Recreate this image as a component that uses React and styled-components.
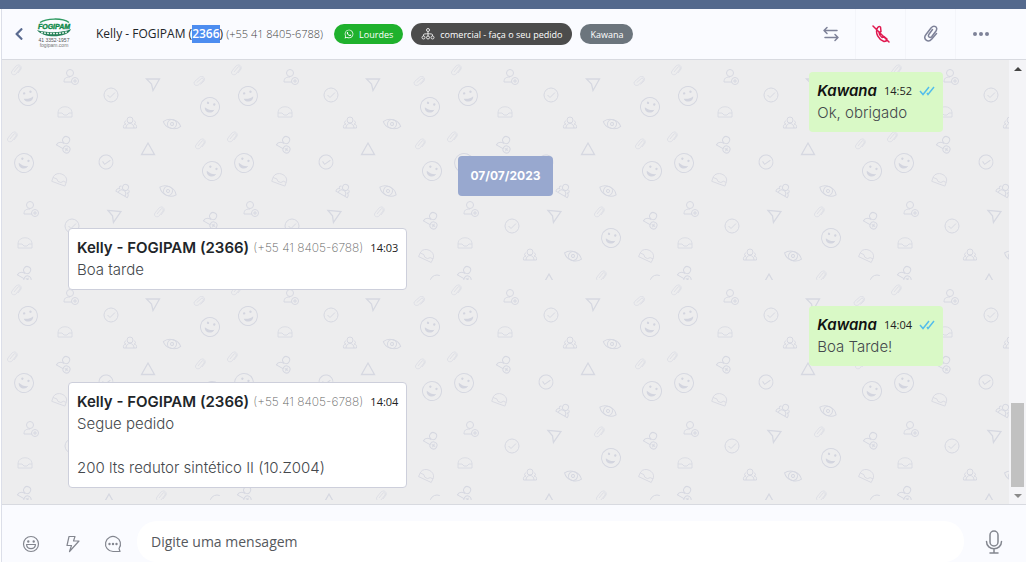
import styled, { createGlobalStyle } from "styled-components";
import { FaChevronLeft, FaWhatsapp } from "react-icons/fa";

const GlobalStyle = createGlobalStyle`
  * {
    box-sizing: border-box;
  }
  body {
    margin: 0;
    font-family: "Open Sans", "Noto Sans", sans-serif;
    color: #212529;
  }
  button {
    background: none;
    border: none;
    padding: 0;
    font: inherit;
    color: inherit;
    cursor: pointer;
  }
`;

const Page = styled.div`
  display: flex;
  flex-direction: column;
  height: 100vh;
  overflow: hidden;
  background-color: #fff;
`;

const TopBar = styled.div`
  flex: none;
  height: 9px;
  background-color: #54698d;
`;

const Panel = styled.main`
  display: flex;
  flex: 1;
  flex-direction: column;
  min-height: 0;
  margin-left: 1px;
  border-left: 1px solid #dcdfe9;
  background-color: #fafbff;
`;

const Header = styled.header`
  align-items: center;
  border-bottom: 1px solid #d8dae0;
  display: flex;
  flex: none;
  height: 51px;
  padding: 0 20px 0 10px;
`;

const BackButton = styled.button`
  color: #5a6b90;
  display: flex;
  width: 24px;
`;

const Contact = styled.h1`
  font-size: 12px;
  font-weight: 400;
  line-height: 18px;
  margin: 0 11px 0 24px;
  white-space: nowrap;
`;

const Selected = styled.span`
  background-color: #4d8df0;
  color: #fff;
  display: inline-block;
  font-weight: 600;
`;

const HeaderPhone = styled.span`
  color: #444;
  font-size: 11px;
  font-weight: 300;
`;

const Tags = styled.div`
  align-items: center;
  display: flex;
  gap: 8px;
`;

const Tag = styled.span`
  align-items: center;
  background-color: ${({ $cor }) => $cor};
  border-radius: 12px;
  color: #fff;
  display: flex;
  font-size: 9px;
  font-weight: 500;
  gap: 5px;
  height: ${({ $alto }) => ($alto ? "22px" : "20px")};
  padding: 0 10px;
  white-space: nowrap;
`;

const Actions = styled.div`
  display: flex;
  margin-left: auto;
`;

const Action = styled.button`
  align-items: center;
  border-right: 1px solid #f4f5fa;
  color: ${({ $cor }) => $cor || "#7e8299"};
  display: flex;
  height: 50px;
  justify-content: center;
  width: 50px;
  &:last-child {
    border-right: none;
  }
`;

const Chat = styled.section`
  display: flex;
  flex: 1;
  min-height: 0;
`;

const Messages = styled.div`
  background-color: #ededee;
  display: flex;
  flex: 1;
  flex-direction: column;
  gap: 16px;
  isolation: isolate;
  overflow: hidden;
  padding: 12px 66px;
  position: relative;
`;

const Wallpaper = styled.svg`
  height: 100%;
  left: 0;
  position: absolute;
  top: 0;
  width: 100%;
  z-index: -1;
`;

const Message = styled.article`
  align-self: ${({ $enviada }) => ($enviada ? "flex-end" : "flex-start")};
  background-color: ${({ $enviada }) => ($enviada ? "#d9f9c6" : "#fff")};
  border: ${({ $enviada }) => ($enviada ? "none" : "1px solid #cdcfdb")};
  border-radius: 4px;
  font-family: Inter, sans-serif;
  font-size: 15px;
  line-height: 22px;
  padding: 8px;
`;

const MessageHead = styled.div`
  align-items: center;
  display: flex;
  white-space: nowrap;
`;

const Author = styled.strong`
  color: ${({ $enviada }) => ($enviada ? "#111" : "#212529")};
  font-style: ${({ $enviada }) => ($enviada ? "italic" : "normal")};
  font-weight: 600;
`;

const Phone = styled.span`
  color: #666;
  font-size: 12px;
  font-weight: 200;
  margin-left: 4px;
`;

const Time = styled.time`
  color: #222;
  font-family: "Open Sans", sans-serif;
  font-size: 11px;
  margin-left: 7px;
`;

const Checks = styled.svg`
  margin-left: 7px;
`;

const Text = styled.p`
  color: #44484c;
  font-weight: 300;
  margin: 0;
  white-space: pre-line;
`;

const DateBadge = styled.div`
  align-self: center;
  background-color: #98a8cf;
  border-radius: 4px;
  color: #fff;
  font-family: Inter, sans-serif;
  font-size: 12px;
  font-weight: 700;
  line-height: 24px;
  margin: 8px 0 16px;
  padding: 8px 13px;
`;

const ScrollBar = styled.div`
  align-items: center;
  background-color: #f4f4f7;
  display: flex;
  flex: none;
  flex-direction: column;
  justify-content: space-between;
  width: 17px;
`;

const ScrollButton = styled.button`
  align-items: center;
  color: ${({ $cor }) => $cor};
  display: flex;
  height: 17px;
  justify-content: center;
  width: 17px;
`;

const Thumb = styled.div`
  background-color: #c1c1c1;
  height: 19%;
  margin-top: auto;
  width: 13px;
`;

const Footer = styled.footer`
  align-items: center;
  border-top: 1px solid #d8dae0;
  color: #83868f;
  display: flex;
  flex: none;
  padding: 16px 22px 0 20px;
`;

const Tools = styled.div`
  display: flex;
  gap: 23px;
  margin-top: 4px;
`;

const ToolButton = styled.button`
  display: flex;
`;

const Input = styled.input`
  background-color: #fff;
  border: none;
  border-radius: 20px;
  color: #444;
  flex: 1;
  font-family: "Open Sans", sans-serif;
  font-size: 14px;
  height: 41px;
  margin: 0 20px 0 15px;
  min-width: 0;
  outline: none;
  padding: 0 14px;
  &::placeholder {
    color: #55585d;
    opacity: 1;
  }
`;

function Logo() {
  return (
    <svg width="36" height="32" viewBox="0 0 36 32" role="img" aria-label="Fogipam">
      <path d="M4 4.500C10 0.500 26 -0.500 33 4.500" fill="none" stroke="#2e9a62" strokeWidth="1.500" />
      <text x="18" y="11" textAnchor="middle" fontFamily="Liberation Sans, sans-serif" fontSize="7" fontWeight="700" fontStyle="italic" fill="#108a4a" stroke="#108a4a" strokeWidth="0.400">
        FOGIPAM
      </text>
      <path d="M1 12C9 15 27 15 35 11C32 20 7 21 1 12Z" fill="#26805a" />
      <path d="M5 14.500C14 16 24 16 31 14" fill="none" stroke="#dcece2" strokeWidth="1.500" strokeDasharray="2 1" />
      <text x="18" y="24" textAnchor="middle" fontFamily="Liberation Sans, sans-serif" fontSize="5" fill="#555">
        41 3352-1957
      </text>
      <text x="18" y="29" textAnchor="middle" fontFamily="Liberation Sans, sans-serif" fontSize="5" fill="#777">
        fogipam.com
      </text>
    </svg>
  );
}

function Icon({ size = 18, width = 1.5, children }) {
  return (
    <svg width={size} height={size} viewBox="0 0 18 18" fill="none" stroke="currentColor" strokeWidth={width} strokeLinecap="round" strokeLinejoin="round" aria-hidden="true">
      {children}
    </svg>
  );
}

const clipPath = "M10.500 4.500L6.800 9.500C5.500 11.800 8.200 13.500 9.800 11.500L14 6C16.500 2 12 -0.500 9 3L4 9.500C0.500 14 6 18.500 9.800 14L14.500 8.500";

function OrgIcon() {
  return (
    <svg width="14" height="14" viewBox="0 0 14 14" fill="none" stroke="#e4e4e4" strokeWidth="1" aria-hidden="true">
      <circle cx="7" cy="3" r="1.500" />
      <path d="M7 4.500V9M2.500 9V7.500C2.500 6.500 11.500 6.500 11.500 7.500V9" />
      <circle cx="2.500" cy="10.500" r="1.500" />
      <circle cx="7" cy="10.500" r="1.500" />
      <circle cx="11.500" cy="10.500" r="1.500" />
    </svg>
  );
}

function ArrowGlyph({ d }) {
  return (
    <svg width="8" height="4" viewBox="0 0 8 4" fill="currentColor" aria-hidden="true">
      <path d={d} />
    </svg>
  );
}

// shapes of the wallpaper, drawn around their own centre
const shapes = {
  clip: <path d="M-2 2L2 -3C3 -4 5 -3 4 -1L0 4C-2 6 -6 4 -4 1L0 -4C2 -6 6 -5 5 -1L2 3" strokeWidth="0.800" opacity="0.800" />,
  smile: (
    <>
      <circle r="9.500" />
      <circle cx="-3" cy="-3.500" r="1.200" fill="#d3d5df" stroke="none" />
      <circle cx="3.500" cy="-3.500" r="1.200" fill="#d3d5df" stroke="none" />
      <path d="M-5 1.500C-1 3 2 3 5 1.500C4 7 -4 7 -5 1.500Z" fill="#d3d5df" stroke="none" />
    </>
  ),
  check: (
    <>
      <circle r="7" />
      <path d="M-3.500 0L-1 2.500L4 -2.500" />
    </>
  ),
  send: <path d="M-6.500 -5H6.500L0 6.500L-1.500 0Z" strokeWidth="1.300" />,
  up: <path d="M0 -6L6.500 5.500H-6.500Z" strokeWidth="1.300" />,
  user: (
    <>
      <circle cx="-1" cy="-4" r="3.500" />
      <path d="M1 5H-7C-7 1 -5 0 -1 0" />
      <circle cx="4" cy="4" r="3.500" />
      <path d="M4 2V6M2 4H6" />
    </>
  ),
  users: (
    <>
      <circle cy="-3" r="3" />
      <path d="M-4 5C-4 -1 4 -1 4 5ZM-4 -2C-6 -2 -6 1 -4 1C-6 1 -7 3 -6.500 5H-4M4 -2C6 -2 6 1 4 1C6 1 7 3 6.500 5H4" />
    </>
  ),
  eye: (
    <>
      <path d="M-9 0C-5 -6 5 -6 9 0C5 6 -5 6 -9 0Z" />
      <circle r="4.500" />
      <circle r="1.500" />
    </>
  ),
  inbox: <path d="M-7 0C-6 -7 6 -7 7 0V5H-7ZM-7 1H-3L-1 3H2L4 1H7" strokeWidth="0.800" />,
};

const wallpaper = [
  ["clip", 16, 10, 0],
  ["user", 71, 17, 0],
  ["send", 153, 24, 0],
  ["clip", 199, 21, 10],
  ["smile", 28, 36, -15],
  ["check", 111, 35, 0],
  ["smile", 210, 47, 15],
  ["inbox", 65, 52, 0],
  ["users", 130, 63, 0],
  ["eye", 172, 64, 15],
  ["clip", 12, 77, 0],
  ["user", 65, 84, 30],
  ["up", 148, 89, 0],
  ["clip", 200, 84, 0],
  ["smile", 24, 103, 20],
  ["check", 106, 102, 10],
  ["smile", 212, 111, 20],
  ["inbox", 60, 119, 20],
  ["users", 124, 130, 30],
  ["eye", 168, 131, 25],
  ["user", 31, 149, 0],
  ["send", 114, 156, 5],
  ["clip", 159, 152, 0],
  ["user", 212, 160, 30],
  ["check", 72, 166, 0],
  ["smile", 171, 178, 15],
  ["inbox", 25, 183, 0],
  ["users", 90, 195, 0],
  ["eye", 133, 196, 20],
  ["inbox", 207, 195, 25],
  ["user", 26, 214, 30],
  ["up", 109, 220, 0],
  ["clip", 161, 216, 0],
  ["check", 217, 222, 0],
  // pieces that cross the edge of the tile
  ["smile", -8, 111, 20],
];

function ChatWallpaper() {
  return (
    <Wallpaper aria-hidden="true">
      <defs>
        <pattern id="wallpaper" x="-2" width="220" height="220" patternUnits="userSpaceOnUse">
          {wallpaper.map(([shape, x, y, turn]) => (
            <g key={`${x}-${y}`} transform={`translate(${x} ${y}) rotate(${turn})`} fill="none" stroke="#d6d8e1">
              {shapes[shape]}
            </g>
          ))}
        </pattern>
      </defs>
      <rect width="100%" height="100%" fill="url(#wallpaper)" />
    </Wallpaper>
  );
}

function ChatMessage({ author, phone, time, text, enviada }) {
  return (
    <Message $enviada={enviada}>
      <MessageHead>
        <Author $enviada={enviada}>{author}</Author>
        {phone && <Phone>{phone}</Phone>}
        <Time>{time}</Time>
        {enviada && (
          <Checks width="16" height="10" viewBox="0 0 16 10" fill="none" stroke="#53bdeb" strokeWidth="1.500" aria-label="Lida">
            <path d="M1 5L4 8.500L10 1M8 7L9 8.500L15 1" />
          </Checks>
        )}
      </MessageHead>
      <Text>{text}</Text>
    </Message>
  );
}

const kelly = { author: "Kelly - FOGIPAM (2366)", phone: "(+55 41 8405-6788)" };

function App() {
  return (
    <>
      <GlobalStyle />
      <Page>
        <TopBar />
        <Panel>
          <Header>
            <BackButton aria-label="Voltar">
              <FaChevronLeft size={14} />
            </BackButton>
            <Logo />
            <Contact>
              Kelly - FOGIPAM (<Selected>2366</Selected>) <HeaderPhone>(+55 41 8405-6788)</HeaderPhone>
            </Contact>
            <Tags>
              <Tag $cor="#1fb12d">
                <FaWhatsapp size={10} />
                Lourdes
              </Tag>
              <Tag $cor="#4c4c4c" $alto>
                <OrgIcon />
                comercial - faça o seu pedido
              </Tag>
              <Tag $cor="#6c757d">Kawana</Tag>
            </Tags>
            <Actions>
              <Action aria-label="Transferir">
                <Icon>
                  <path d="M5 2.500L2 5.500L5 8.500M2 5.500H15M13 9.500L16 12.500L13 15.500M16 12.500H3" />
                </Icon>
              </Action>
              <Action aria-label="Encerrar" $cor="#e0184f">
                <Icon>
                  <path d="M1 1L17 17M5 4C3.500 8 6 14 12 16.500C14 16.500 15 15 15 14L12 11.500L10 12.500C8 11 7 9 7 7.500L9 6.500L8.500 2C7 1 5.500 2 5 4Z" />
                </Icon>
              </Action>
              <Action aria-label="Anexar">
                <Icon>
                  <path d={clipPath} />
                </Icon>
              </Action>
              <Action aria-label="Mais opções">
                <Icon>
                  <g fill="currentColor" stroke="none">
                    <circle cx="3" cy="9" r="2" />
                    <circle cx="9" cy="9" r="2" />
                    <circle cx="15" cy="9" r="2" />
                  </g>
                </Icon>
              </Action>
            </Actions>
          </Header>
          <Chat>
            <Messages>
              <ChatWallpaper />
              <ChatMessage author="Kawana" time="14:52" text="Ok, obrigado" enviada />
              <DateBadge>07/07/2023</DateBadge>
              <ChatMessage {...kelly} time="14:03" text="Boa tarde" />
              <ChatMessage author="Kawana" time="14:04" text="Boa Tarde!" enviada />
              <ChatMessage {...kelly} time="14:04" text={"Segue pedido\n\n200 lts redutor sintético II (10.Z004)"} />
            </Messages>
            <ScrollBar>
              <ScrollButton aria-label="Subir" $cor="#444">
                <ArrowGlyph d="M0 4L4 0L8 4Z" />
              </ScrollButton>
              <Thumb />
              <ScrollButton aria-label="Descer" $cor="#8a8a8a">
                <ArrowGlyph d="M0 0L4 4L8 0Z" />
              </ScrollButton>
            </ScrollBar>
          </Chat>
          <Footer>
            <Tools>
              <ToolButton aria-label="Emojis">
                <Icon width={1.2}>
                  <circle cx="9" cy="9" r="7.500" />
                  <circle cx="6.300" cy="6.500" r="0.600" fill="currentColor" />
                  <circle cx="11.700" cy="6.500" r="0.600" fill="currentColor" />
                  <path d="M4.500 9.500H13.500C13 15 5 15 4.500 9.500Z" />
                </Icon>
              </ToolButton>
              <ToolButton aria-label="Respostas rápidas">
                <Icon width={1.2}>
                  <path d="M6 1.500H12L10.500 6H16L6.500 16.500L8.500 10.500H4Z" />
                </Icon>
              </ToolButton>
              <ToolButton aria-label="Mensagens">
                <Icon width={1.2}>
                  <path d="M16 16.500L15 13.500A7.500 7.500 0 1 0 9 16.500Z" />
                  <g fill="currentColor" stroke="none">
                    <circle cx="5.500" cy="9" r="1.200" />
                    <circle cx="9" cy="9" r="1.200" />
                    <circle cx="12.500" cy="9" r="1.200" />
                  </g>
                </Icon>
              </ToolButton>
            </Tools>
            <Input type="text" aria-label="Mensagem" placeholder="Digite uma mensagem" />
            <ToolButton aria-label="Gravar áudio">
              <svg width="20" height="26" viewBox="0 0 20 26" fill="none" stroke="currentColor" strokeWidth="1.500" strokeLinecap="round" aria-hidden="true">
                <rect x="6" y="2" width="8" height="15" rx="4" />
                <path d="M2.500 12.500C2.500 22 17.500 22 17.500 12.500M10 20V24M6 24H14" />
              </svg>
            </ToolButton>
          </Footer>
        </Panel>
      </Page>
    </>
  );
}

export default App;
